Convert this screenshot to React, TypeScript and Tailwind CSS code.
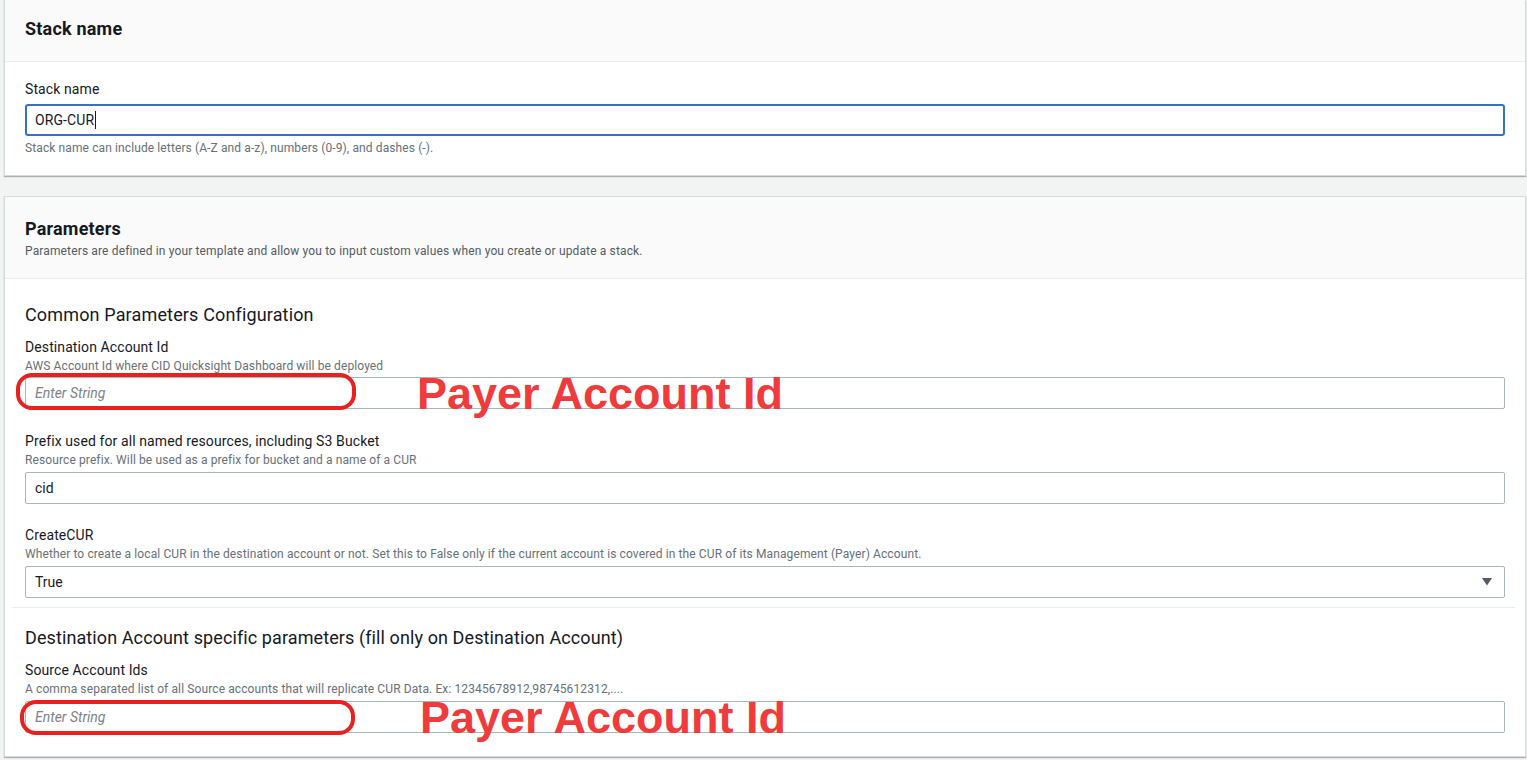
import React from "react";

const font = { fontFamily: "Roboto, 'Noto Sans', Arial, sans-serif" };

function Annotation({ rectClass, textClass }: { rectClass: string; textClass: string }) {
  return (
    <>
      <div className={`pointer-events-none absolute rounded-[16px] border-[4px] border-[#e8201f] ${rectClass}`} />
      <div
        className={`pointer-events-none absolute whitespace-nowrap text-[45px] font-bold leading-none text-[#ef3b3b] ${textClass}`}
        style={{ fontFamily: "'Liberation Sans', Arial, sans-serif" }}
      >
        Payer Account Id
      </div>
    </>
  );
}

function Field({
  label,
  desc,
  children,
  className = "",
}: {
  label: string;
  desc: string;
  children: React.ReactNode;
  className?: string;
}) {
  return (
    <div className={`flex flex-col ${className}`}>
      <div className="text-[14px] leading-[22px] tracking-[0.1px] text-[#16191f]">{label}</div>
      <div className="text-[12px] leading-[16px] tracking-[0.11px] text-[#687078]">{desc}</div>
      {children}
    </div>
  );
}

export default function App() {
  return (
    <div className="min-h-[760px] w-full bg-[#f2f3f3] pl-[4px] pr-[1px]" style={font}>
      {/* Card 1 */}
      <div className="border-x border-b border-[#d5dbdb] bg-white shadow-[0_1px_1px_0_rgba(0,28,36,0.3)]">
        <div className="border-b border-[#eaeded] bg-[#fafafa] px-[20px] pb-[21px] pt-[18px]">
          <h2 className="text-[18px] font-bold leading-[22px] tracking-[0.2px] text-[#16191f]">Stack name</h2>
        </div>
        <div className="px-[20px] pb-[19px] pt-[16px]">
          <div className="text-[14px] leading-[22px] tracking-[0.1px] text-[#16191f]">Stack name</div>
          <div className="mt-[4px] flex h-[32px] items-center rounded-[3px] border-2 border-[#3672c3] px-[8px] text-[14px] tracking-[0.1px] text-[#16191f]">
            <span>ORG-CUR</span>
            <span className="ml-[1px] h-[18px] w-px bg-[#16191f]" />
          </div>
          <div className="mt-[4px] text-[12px] leading-[16px] tracking-[0.11px] text-[#687078]">
            Stack name can include letters (A-Z and a-z), numbers (0-9), and dashes (-).
          </div>
        </div>
      </div>

      {/* Card 2 */}
      <div className="mt-[20px] border border-[#d5dbdb] bg-white shadow-[0_1px_1px_0_rgba(0,28,36,0.3)]">
        <div className="border-b border-[#eaeded] bg-[#fafafa] px-[20px] pb-[19px] pt-[21px]">
          <h2 className="text-[18px] font-bold leading-[22px] tracking-[0.2px] text-[#16191f]">Parameters</h2>
          <p className="mt-[3px] text-[12px] leading-[16px] tracking-[0.14px] text-[#545b64]">
            Parameters are defined in your template and allow you to input custom values when you create or update a stack.
          </p>
        </div>

        <div className="px-[20px] pt-[25px]">
          <h3 className="text-[18px] leading-[22px] tracking-[0.15px] text-[#16191f]">Common Parameters Configuration</h3>

          <Field label="Destination Account Id" desc="AWS Account Id where CID Quicksight Dashboard will be deployed" className="mt-[10px]">
            <div className="relative mt-[3px]">
              <div className="flex h-[32px] items-center rounded-[2px] border border-[#aab7b8] px-[9px] text-[14px] italic text-[#7d8288]">
                Enter String
              </div>
              <Annotation rectClass="left-[-9px] top-[-4px] h-[37px] w-[340px]" textClass="left-[392px] top-[-6px]" />
            </div>
          </Field>

          <Field label="Prefix used for all named resources, including S3 Bucket" desc="Resource prefix. Will be used as a prefix for bucket and a name of a CUR" className="mt-[21px]">
            <div className="mt-[4px] flex h-[32px] items-center rounded-[2px] border border-[#aab7b8] px-[9px] text-[14px] text-[#16191f]">
              cid
            </div>
          </Field>

          <Field
            label="CreateCUR"
            desc="Whether to create a local CUR in the destination account or not. Set this to False only if the current account is covered in the CUR of its Management (Payer) Account."
            className="mt-[20px]"
          >
            <div className="mt-[4px] flex h-[32px] items-center justify-between rounded-[2px] border border-[#aab7b8] pl-[9px] pr-[12px] text-[14px] text-[#16191f]">
              <span>True</span>
              <svg width="10" height="8" viewBox="0 0 10 8">
                <path d="M0 0 H10 L5 7.5 Z" fill="#545b64" />
              </svg>
            </div>
          </Field>
        </div>

        <div className="ml-[7px] mr-[10px] mt-[9px] h-px bg-[#eaeded]" />

        <div className="px-[20px] pb-[23px] pt-[19px]">
          <h3 className="text-[18px] leading-[22px] tracking-[0.1px] text-[#16191f]">
            Destination Account specific parameters (fill only on Destination Account)
          </h3>
          <Field
            label="Source Account Ids"
            desc="A comma separated list of all Source accounts that will replicate CUR Data. Ex: 12345678912,98745612312,...."
            className="mt-[10px]"
          >
            <div className="relative mt-[4px]">
              <div className="flex h-[32px] items-center rounded-[2px] border border-[#aab7b8] px-[9px] text-[14px] italic text-[#7d8288]">
                Enter String
              </div>
              <Annotation rectClass="left-[-5px] top-[-1px] h-[35px] w-[335px]" textClass="left-[395px] top-[-6px]" />
            </div>
          </Field>
        </div>
      </div>
    </div>
  );
}
